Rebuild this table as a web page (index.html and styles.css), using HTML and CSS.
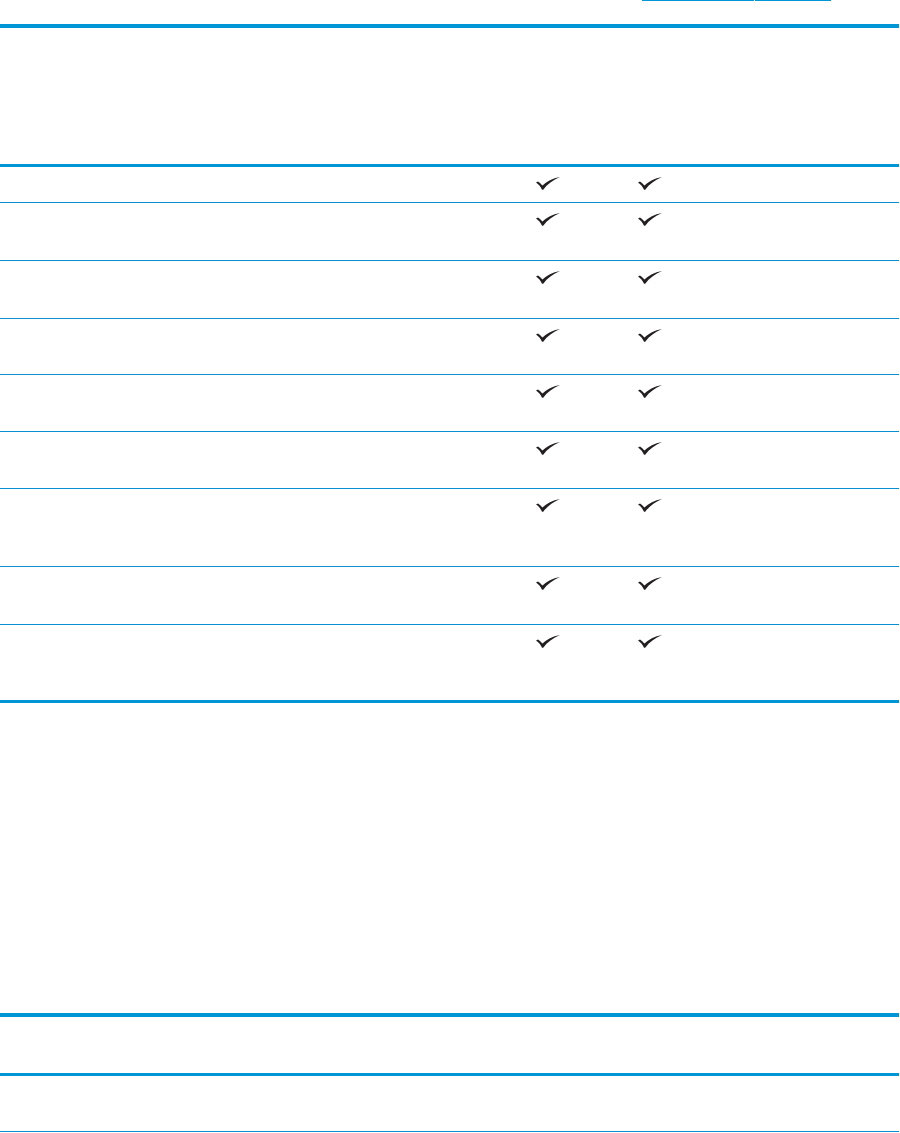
FILE: index.html
```html
<!DOCTYPE html>
<html lang="en">
<head>
<meta charset="utf-8">
<title>Table</title>
<link rel="stylesheet" href="styles.css">
</head>
<body>
<div class="page">
  <div class="topbar">
    <span class="link-u u1"></span>
    <span class="link-u u2"></span>
  </div>

  <div class="table t1">
    <div class="thead"></div>
    <div class="row r1"><div class="c0"></div><div class="c1"><svg class="chk" viewBox="0 0 24 13"><path d="M0 5.6 L2 4.6 C3.6 5.6 5 7 6.4 8.6 C10.5 4.4 16.5 1.4 24 0 C17 3 11.2 7.2 7.2 12.8 L6 12.8 C4.6 9.8 2.6 7.2 0 5.6 Z"/></svg></div><div class="c2"><svg class="chk" viewBox="0 0 24 13"><path d="M0 5.6 L2 4.6 C3.6 5.6 5 7 6.4 8.6 C10.5 4.4 16.5 1.4 24 0 C17 3 11.2 7.2 7.2 12.8 L6 12.8 C4.6 9.8 2.6 7.2 0 5.6 Z"/></svg></div></div>
    <div class="row r2"><div class="c0"></div><div class="c1"><svg class="chk" viewBox="0 0 24 13"><path d="M0 5.6 L2 4.6 C3.6 5.6 5 7 6.4 8.6 C10.5 4.4 16.5 1.4 24 0 C17 3 11.2 7.2 7.2 12.8 L6 12.8 C4.6 9.8 2.6 7.2 0 5.6 Z"/></svg></div><div class="c2"><svg class="chk" viewBox="0 0 24 13"><path d="M0 5.6 L2 4.6 C3.6 5.6 5 7 6.4 8.6 C10.5 4.4 16.5 1.4 24 0 C17 3 11.2 7.2 7.2 12.8 L6 12.8 C4.6 9.8 2.6 7.2 0 5.6 Z"/></svg></div></div>
    <div class="row r3"><div class="c0"></div><div class="c1"><svg class="chk" viewBox="0 0 24 13"><path d="M0 5.6 L2 4.6 C3.6 5.6 5 7 6.4 8.6 C10.5 4.4 16.5 1.4 24 0 C17 3 11.2 7.2 7.2 12.8 L6 12.8 C4.6 9.8 2.6 7.2 0 5.6 Z"/></svg></div><div class="c2"><svg class="chk" viewBox="0 0 24 13"><path d="M0 5.6 L2 4.6 C3.6 5.6 5 7 6.4 8.6 C10.5 4.4 16.5 1.4 24 0 C17 3 11.2 7.2 7.2 12.8 L6 12.8 C4.6 9.8 2.6 7.2 0 5.6 Z"/></svg></div></div>
    <div class="row r4"><div class="c0"></div><div class="c1"><svg class="chk" viewBox="0 0 24 13"><path d="M0 5.6 L2 4.6 C3.6 5.6 5 7 6.4 8.6 C10.5 4.4 16.5 1.4 24 0 C17 3 11.2 7.2 7.2 12.8 L6 12.8 C4.6 9.8 2.6 7.2 0 5.6 Z"/></svg></div><div class="c2"><svg class="chk" viewBox="0 0 24 13"><path d="M0 5.6 L2 4.6 C3.6 5.6 5 7 6.4 8.6 C10.5 4.4 16.5 1.4 24 0 C17 3 11.2 7.2 7.2 12.8 L6 12.8 C4.6 9.8 2.6 7.2 0 5.6 Z"/></svg></div></div>
    <div class="row r5"><div class="c0"></div><div class="c1"><svg class="chk" viewBox="0 0 24 13"><path d="M0 5.6 L2 4.6 C3.6 5.6 5 7 6.4 8.6 C10.5 4.4 16.5 1.4 24 0 C17 3 11.2 7.2 7.2 12.8 L6 12.8 C4.6 9.8 2.6 7.2 0 5.6 Z"/></svg></div><div class="c2"><svg class="chk" viewBox="0 0 24 13"><path d="M0 5.6 L2 4.6 C3.6 5.6 5 7 6.4 8.6 C10.5 4.4 16.5 1.4 24 0 C17 3 11.2 7.2 7.2 12.8 L6 12.8 C4.6 9.8 2.6 7.2 0 5.6 Z"/></svg></div></div>
    <div class="row r6"><div class="c0"></div><div class="c1"><svg class="chk" viewBox="0 0 24 13"><path d="M0 5.6 L2 4.6 C3.6 5.6 5 7 6.4 8.6 C10.5 4.4 16.5 1.4 24 0 C17 3 11.2 7.2 7.2 12.8 L6 12.8 C4.6 9.8 2.6 7.2 0 5.6 Z"/></svg></div><div class="c2"><svg class="chk" viewBox="0 0 24 13"><path d="M0 5.6 L2 4.6 C3.6 5.6 5 7 6.4 8.6 C10.5 4.4 16.5 1.4 24 0 C17 3 11.2 7.2 7.2 12.8 L6 12.8 C4.6 9.8 2.6 7.2 0 5.6 Z"/></svg></div></div>
    <div class="row r7"><div class="c0"></div><div class="c1"><svg class="chk" viewBox="0 0 24 13"><path d="M0 5.6 L2 4.6 C3.6 5.6 5 7 6.4 8.6 C10.5 4.4 16.5 1.4 24 0 C17 3 11.2 7.2 7.2 12.8 L6 12.8 C4.6 9.8 2.6 7.2 0 5.6 Z"/></svg></div><div class="c2"><svg class="chk" viewBox="0 0 24 13"><path d="M0 5.6 L2 4.6 C3.6 5.6 5 7 6.4 8.6 C10.5 4.4 16.5 1.4 24 0 C17 3 11.2 7.2 7.2 12.8 L6 12.8 C4.6 9.8 2.6 7.2 0 5.6 Z"/></svg></div></div>
    <div class="row r8"><div class="c0"></div><div class="c1"><svg class="chk" viewBox="0 0 24 13"><path d="M0 5.6 L2 4.6 C3.6 5.6 5 7 6.4 8.6 C10.5 4.4 16.5 1.4 24 0 C17 3 11.2 7.2 7.2 12.8 L6 12.8 C4.6 9.8 2.6 7.2 0 5.6 Z"/></svg></div><div class="c2"><svg class="chk" viewBox="0 0 24 13"><path d="M0 5.6 L2 4.6 C3.6 5.6 5 7 6.4 8.6 C10.5 4.4 16.5 1.4 24 0 C17 3 11.2 7.2 7.2 12.8 L6 12.8 C4.6 9.8 2.6 7.2 0 5.6 Z"/></svg></div></div>
    <div class="row r9 last"><div class="c0"></div><div class="c1"><svg class="chk" viewBox="0 0 24 13"><path d="M0 5.6 L2 4.6 C3.6 5.6 5 7 6.4 8.6 C10.5 4.4 16.5 1.4 24 0 C17 3 11.2 7.2 7.2 12.8 L6 12.8 C4.6 9.8 2.6 7.2 0 5.6 Z"/></svg></div><div class="c2"><svg class="chk" viewBox="0 0 24 13"><path d="M0 5.6 L2 4.6 C3.6 5.6 5 7 6.4 8.6 C10.5 4.4 16.5 1.4 24 0 C17 3 11.2 7.2 7.2 12.8 L6 12.8 C4.6 9.8 2.6 7.2 0 5.6 Z"/></svg></div></div>
  </div>

  <div class="table t2">
    <div class="thead2"></div>
    <div class="row2"></div>
  </div>
</div>
</body>
</html>
```

FILE: styles.css
```css
html, body {
  margin: 0;
  padding: 0;
  background: #ffffff;
  font-family: "Liberation Sans", Arial, sans-serif;
}

.page {
  width: 900px;
}

.topbar {
  height: 24px;
  display: flex;
  align-items: flex-start;
  padding-left: 642px;
  gap: 1px;
}

.link-u {
  display: block;
  height: 1px;
  background: #0096d6;
}
.u1 { width: 112px; }
.u2 { width: 76px; }

.table {
  width: 899px;
}

.t1 {
  border-top: 4px solid #0096d6;
}

.thead {
  height: 136px;
  border-bottom: 3px solid #0096d6;
}

.row {
  display: grid;
  grid-template-columns: 536px 102px 1fr;
  border-bottom: 1px solid #0a8fd2;
  box-sizing: border-box;
  padding-top: 10px;
}
.row.last {
  border-bottom: 3px solid #0096d6;
}

.r1 { height: 36px; }
.r2 { height: 58px; }
.r3 { height: 58px; }
.r4 { height: 56px; }
.r5 { height: 57px; }
.r6 { height: 57px; }
.r7 { height: 78px; }
.r8 { height: 58px; }
.r9 { height: 78px; }

.chk {
  display: block;
  width: 24px;
  height: 13px;
  fill: #231f20;
}

.t2 {
  margin-top: 310px;
  border-top: 4px solid #0096d6;
}

.thead2 {
  height: 56px;
  border-bottom: 3px solid #0096d6;
}

.row2 {
  height: 55px;
  border-bottom: 1px solid #0a8fd2;
}
```
